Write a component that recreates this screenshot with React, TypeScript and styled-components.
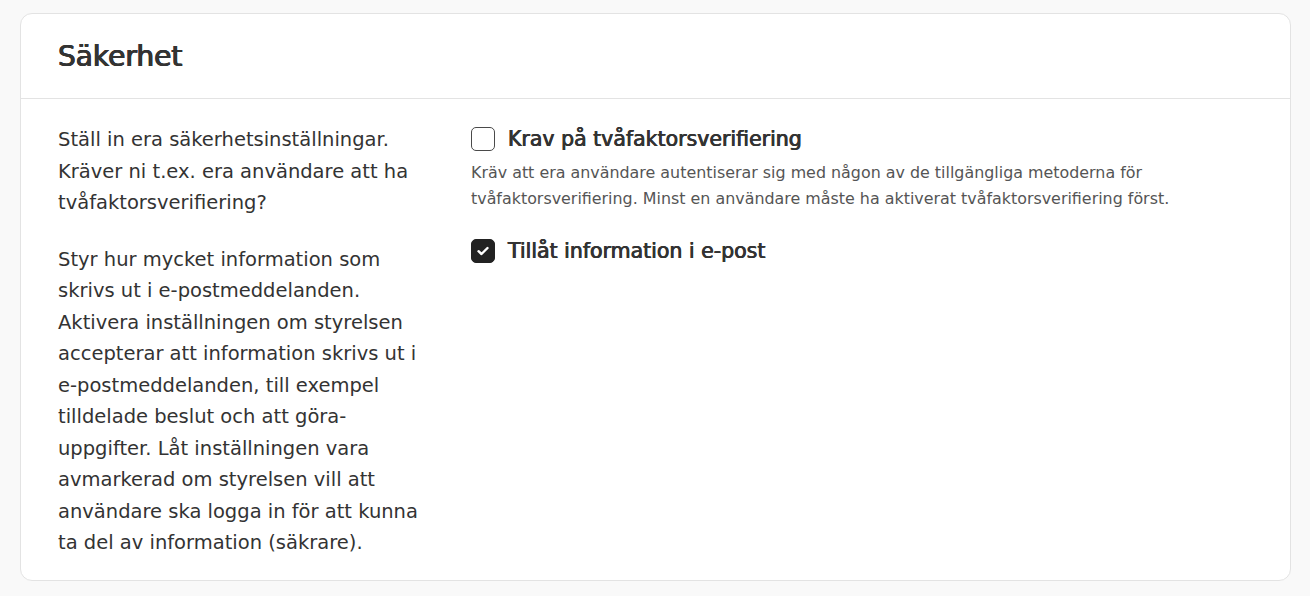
import React from 'react'
import styled, { createGlobalStyle } from 'styled-components'

const GlobalStyle = createGlobalStyle`
  html, body {
    margin: 0;
    padding: 0;
    background: #f9f9f9;
  }
  body {
    font-family: "DejaVu Sans", "Open Sans", sans-serif;
    color: #333333;
  }
`

const App: React.FC = () => {
  return (
    <Page>
      <GlobalStyle />
      <Card>
        <CardHeader>
          <Title>Säkerhet</Title>
        </CardHeader>
        <CardBody>
          <Intro>
            <Paragraph>
              Ställ in era säkerhetsinställningar. Kräver ni t.ex. era användare att ha tvåfaktorsverifiering?
            </Paragraph>
            <Paragraph>
              Styr hur mycket information som skrivs ut i e-postmeddelanden. Aktivera inställningen om styrelsen accepterar att information skrivs ut i e-postmeddelanden, till exempel tilldelade beslut och att göra-uppgifter. Låt inställningen vara avmarkerad om styrelsen vill att användare ska logga in för att kunna ta del av information (säkrare).
            </Paragraph>
          </Intro>
          <Options>
            <Option>
              <CheckRow>
                <Box checked={false} />
                <Label>Krav på tvåfaktorsverifiering</Label>
              </CheckRow>
              <Help>
                Kräv att era användare autentiserar sig med någon av de tillgängliga metoderna för tvåfaktorsverifiering. Minst en användare måste ha aktiverat tvåfaktorsverifiering först.
              </Help>
            </Option>
            <Option>
              <CheckRow>
                <Box checked>
                  <svg width='12' height='10' viewBox='0 0 12 10'>
                    <path d='M1.5 5.2 L4.5 8 L10.5 2' fill='none' stroke='#fff' strokeWidth='2.4' strokeLinecap='round' strokeLinejoin='round' />
                  </svg>
                </Box>
                <Label>Tillåt information i e-post</Label>
              </CheckRow>
            </Option>
          </Options>
        </CardBody>
      </Card>
    </Page>
  )
}

export default App

const Page = styled.div`
  padding: 13px 19px 15px 20px;
`
const Card = styled.section`
  background: #ffffff;
  border: 1px solid #e3e3e3;
  border-radius: 12px;
`
const CardHeader = styled.header`
  height: 84px;
  padding: 0 37px;
  border-bottom: 1px solid #e3e3e3;

  display: flex;
  align-items: center;
`
const Title = styled.h1`
  margin: 0;
  font-size: 28px;
  font-weight: 400;
  color: #333333;
  text-shadow: 0.6px 0 0 #333333, -0.6px 0 0 #333333, 0 0.4px 0 #333333;
`
const CardBody = styled.div`
  padding: 25px 37px 21px;

  display: grid;
  grid-template-columns: 375px 1fr;
  gap: 38px;
`
const Intro = styled.div`
  display: flex;
  flex-direction: column;
  gap: 25px;
`
const Paragraph = styled.p`
  margin: 0;
  font-size: 19.5px;
  line-height: 31.5px;
`
const Options = styled.div`
  display: flex;
  flex-direction: column;
  gap: 23px;
  margin-top: -1px;
`
const Option = styled.div`
  display: flex;
  flex-direction: column;
  gap: 5px;
`
const CheckRow = styled.label`
  display: flex;
  align-items: center;
  gap: 13px;
  height: 32px;
`
const Box = styled.span<{ checked?: boolean }>`
  width: 24px;
  height: 24px;
  box-sizing: border-box;
  border-radius: 5px;
  border: 1px solid ${p => (p.checked ? '#222222' : '#4a4a4a')};
  background: ${p => (p.checked ? '#222222' : '#ffffff')};

  display: flex;
  align-items: center;
  justify-content: center;
`
const Label = styled.span`
  font-size: 20.5px;
  font-weight: 400;
  color: #333333;
  text-shadow: 0.4px 0 0 #333333, -0.4px 0 0 #333333;
`
const Help = styled.p`
  margin: 0;
  font-size: 15.9px;
  line-height: 26px;
  color: #555555;
`
